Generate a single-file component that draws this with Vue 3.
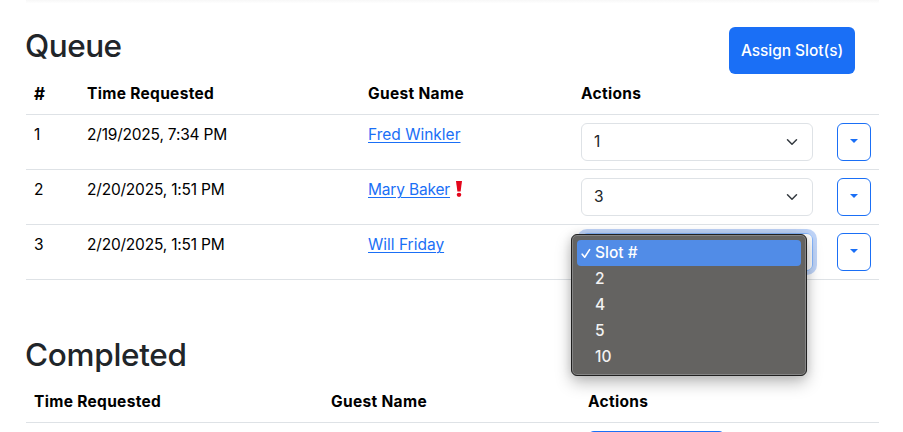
<script setup>
const rows = [
  { id: 1, time: '2/19/2025, 7:34 PM', guest: 'Fred Winkler', slot: '1' },
  { id: 2, time: '2/20/2025, 1:51 PM', guest: 'Mary Baker', slot: '3', alert: true },
  { id: 3, time: '2/20/2025, 1:51 PM', guest: 'Will Friday', slot: '', open: true },
]
const options = ['Slot #', '2', '4', '5', '10']
</script>

<template>
  <main class="page">
    <div class="card-edge"></div>
    <header class="heading">
      <h2 class="queue-title">Queue</h2>
      <button class="assign"><span>Assign Slot(s)</span></button>
    </header>

    <section class="queue">
      <div class="row head">
        <div class="cell hash">#</div>
        <div class="cell">Time Requested</div>
        <div class="cell">Guest Name</div>
        <div class="cell">Actions</div>
      </div>
      <div v-for="r in rows" :key="r.id" class="row">
        <div class="cell">{{ r.id }}</div>
        <div class="cell time">{{ r.time }}</div>
        <div class="cell guest">
          <a :class="{ flagged: r.alert }">{{ r.guest }}</a>
          <svg v-if="r.alert" class="alert" width="8" height="18" viewBox="0 0 8 18">
            <path d="M1 1H7L5.6 11.5H2.4Z" fill="#e3051b" />
            <ellipse cx="4" cy="14.8" rx="2.3" ry="2.1" fill="#e3051b" />
          </svg>
        </div>
        <div class="cell action">
          <div class="select" :class="{ focused: r.open }">
            <span>{{ r.slot }}</span>
            <svg width="16" height="12" viewBox="0 0 16 16" class="chevron">
              <path d="m2 5 6 6 6-6" fill="none" stroke="#343a40" stroke-width="2" stroke-linecap="round" stroke-linejoin="round" />
            </svg>
          </div>
          <div v-if="r.open" class="menu">
            <div v-for="(o, i) in options" :key="o" class="option" :class="{ active: i === 0 }">
              <svg v-if="i === 0" class="check" width="10" height="11" viewBox="0 0 10 11">
                <path d="M1.2 6.2 3.7 9.2 8.6 1.6" fill="none" stroke="#fff" stroke-width="1.6" stroke-linecap="round" stroke-linejoin="round" />
              </svg>
              <span>{{ o }}</span>
            </div>
          </div>
        </div>
        <div class="cell action">
          <button class="toggle" aria-label="More actions"><i class="caret"></i></button>
        </div>
      </div>
    </section>

    <h2 class="completed-title">Completed</h2>
    <section>
      <div class="row head done">
        <div class="cell">Time Requested</div>
        <div class="cell">Guest Name</div>
        <div class="cell">Actions</div>
      </div>
      <div class="next"></div>
    </section>
  </main>
</template>

<style>
body {
  background: #fff;
  overflow: hidden;
}
</style>

<style scoped>
* {
  box-sizing: border-box;
}
.page {
  height: 432px;
  overflow: hidden;
  padding: 0 24px 0 26px;
  font-family: Inter, "Liberation Sans", sans-serif;
  font-size: 15.5px;
  line-height: 24px;
  color: #000;
}
.card-edge {
  height: 3px;
  background: linear-gradient(#f7f7f7, #fefefe);
}
.heading {
  display: flex;
  justify-content: space-between;
  height: 71px;
  padding-right: 24px;
}
h2 {
  margin: 0 0 0 -1px;
  font-size: 31.5px;
  font-weight: 500;
  line-height: 38px;
  color: #212529;
}
.queue-title {
  padding-top: 24px;
  letter-spacing: -0.5px;
}
.assign {
  width: 126px;
  height: 47px;
  margin-top: 24px;
  padding: 0;
  border: 0;
  border-radius: 6px;
  background: #1a6ff6;
  color: #fff;
  font: 500 15.5px/24px Inter, sans-serif;
  letter-spacing: -0.05px;
  white-space: nowrap;
}
.row {
  display: grid;
  grid-template-columns: 53px 281px 213px 256px 50px;
  height: 55px;
  border-bottom: 1px solid #dee2e6;
}
.cell {
  padding: 8px 8px 0;
  white-space: nowrap;
}
.head {
  height: 41px;
  font-weight: 700;
  letter-spacing: 0.32px;
}
.hash {
  font-size: 17px;
}
.done {
  grid-template-columns: 297px 257px 1fr;
}
.time {
  letter-spacing: -0.2px;
}
.guest {
  display: flex;
}
a {
  height: 24px;
  color: #1a6ff6;
  text-decoration: underline;
  text-underline-offset: 2px;
  text-decoration-thickness: 1px;
}
.flagged {
  letter-spacing: -0.17px;
}
.alert {
  margin: 2px 0 0 5px;
}
.action {
  position: relative;
}
.select {
  display: flex;
  align-items: center;
  justify-content: space-between;
  width: 232px;
  height: 38px;
  padding: 0 12px;
  border: 1px solid #dee2e6;
  border-radius: 6px;
  color: #212529;
}
.focused {
  border-color: #86b7fe;
  box-shadow: 0 0 0 4px #bfd4f8;
}
.toggle {
  display: flex;
  align-items: center;
  justify-content: center;
  width: 34px;
  height: 38px;
  padding: 0 0 2px;
  border: 1px solid #1a6ff6;
  border-radius: 6px;
  background: #fff;
}
.caret {
  border-top: 4px solid #1a6ff6;
  border-left: 4px solid transparent;
  border-right: 4px solid transparent;
}
.menu {
  position: absolute;
  z-index: 2;
  top: 9px;
  left: -2px;
  width: 236px;
  height: 142px;
  padding: 5px;
  border: 1px solid #202020;
  border-radius: 6px;
  background: #646361;
  box-shadow: inset 0 0 0 1px #858585, 0 7px 16px rgba(0, 0, 0, 0.26), 0 0 10px rgba(0, 0, 0, 0.12);
  color: #f2f2f2;
  font-weight: 500;
}
.option {
  position: relative;
  height: 26px;
  padding-left: 18px;
  line-height: 26px;
  border-radius: 4px;
}
.active {
  background: #518ce7;
  color: #fff;
}
.check {
  position: absolute;
  left: 4px;
  top: 8px;
}
.completed-title {
  padding-top: 56px;
  height: 102px;
  letter-spacing: -0.3px;
}
.next {
  width: 137px;
  height: 38px;
  margin: 8px 0 0 562px;
  border-radius: 6px;
  background: #1a6ff6;
}
</style>
